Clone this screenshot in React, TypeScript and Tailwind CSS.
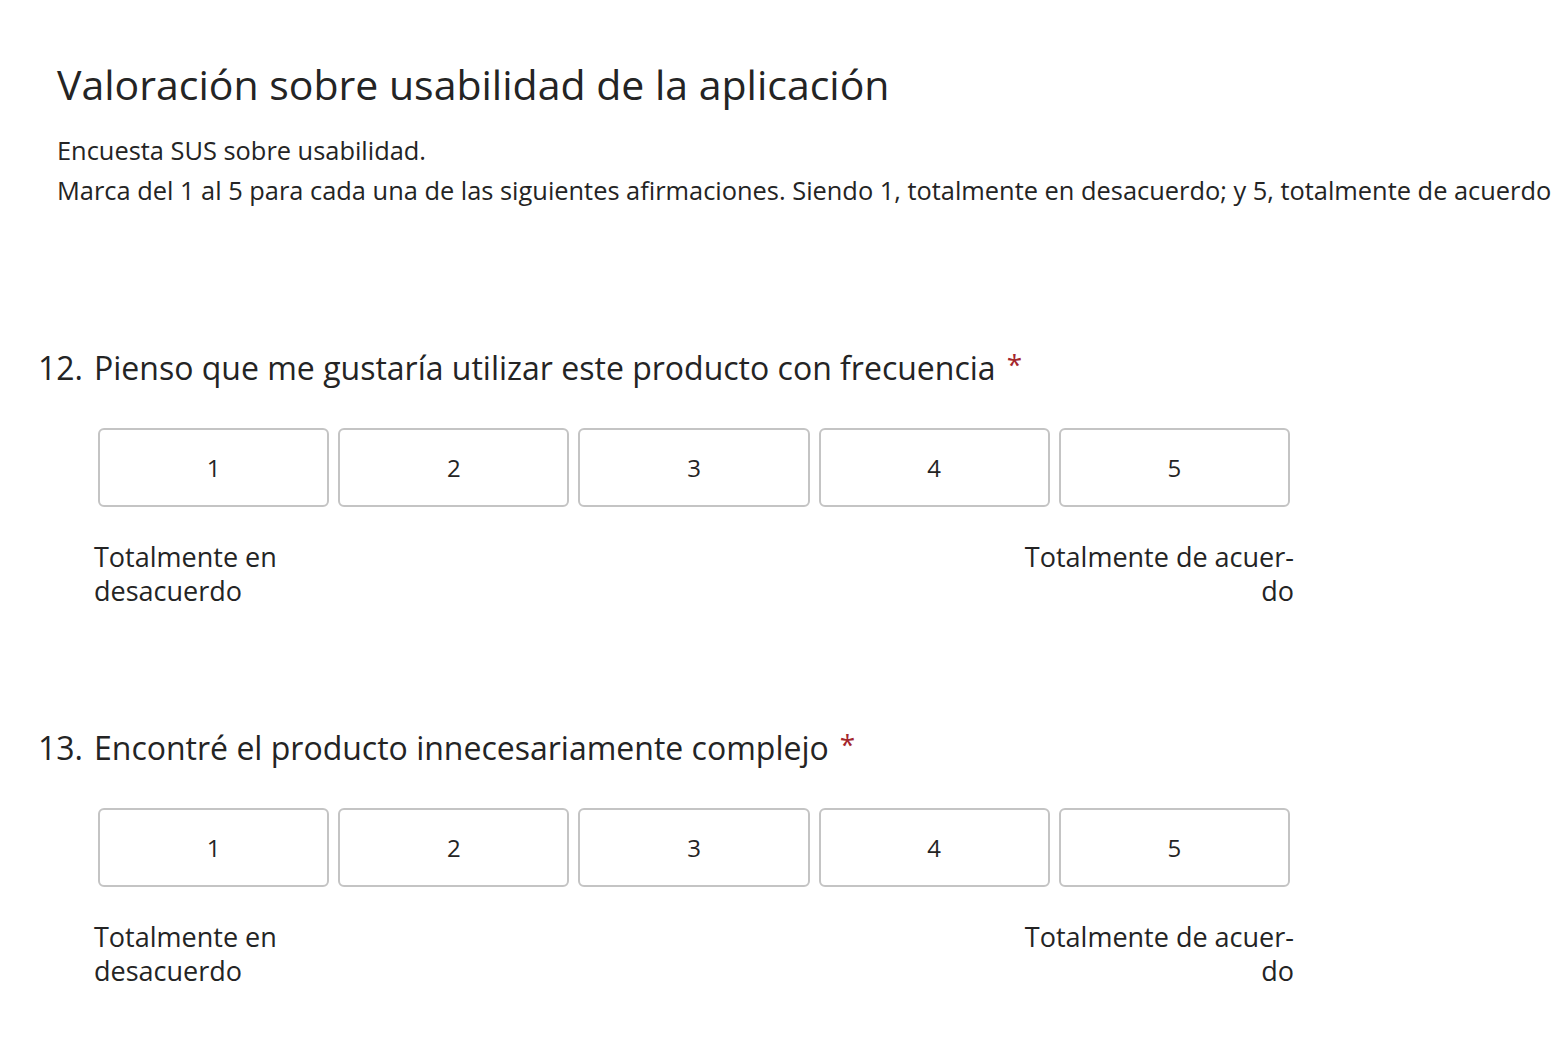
import React from "react";

const font = { fontFamily: '"Segoe UI", "Open Sans", "Noto Sans", sans-serif' };

type Q = { n: number; text: string };

const questions: Q[] = [
  { n: 12, text: "Pienso que me gustaría utilizar este producto con frecuencia" },
  { n: 13, text: "Encontré el producto innecesariamente complejo" },
];

function Question({ q }: { q: Q }) {
  return (
    <div className="mt-[120px] first:mt-0">
      {/* titulo de la pregunta */}
      <div className="flex items-baseline text-[32px] leading-[40px] text-[#242424]">
        <span className="w-[56px] shrink-0">{q.n}.</span>
        <span>{q.text}</span>
        <span className="ml-[11px] relative -top-[5px] text-[28px] text-[#a4262c]">*</span>
      </div>

      {/* escala 1..5 */}
      <div className="mt-[39px] ml-[60px] w-[1192px]">
        <div className="grid grid-cols-5 gap-[9px]">
          {[1, 2, 3, 4, 5].map((v) => (
            <div
              key={v}
              className="h-[79px] rounded-[6px] border-2 border-[#c4c4c4] bg-white flex items-center justify-center text-[24px] text-[#242424]"
            >
              {v}
            </div>
          ))}
        </div>
        <div className="-ml-[4px] -mr-[4px] mt-[33px] flex justify-between text-[27px] leading-[34px] text-[#242424]">
          <div>
            Totalmente en
            <br />
            desacuerdo
          </div>
          <div className="text-right">
            Totalmente de acuer-
            <br />
            do
          </div>
        </div>
      </div>
    </div>
  );
}

export default function App() {
  return (
    <main className="min-h-screen bg-white" style={font}>
      {/* encabezado */}
      <section className="pl-[57px] pt-[56px]">
        <h1 className="text-[41px] leading-[56px] text-[#242424]">
          Valoración sobre usabilidad de la aplicación
        </h1>
        <div className="mt-[18px] text-[25.4px] leading-[40px] text-[#242424] whitespace-nowrap">
          <p>Encuesta SUS sobre usabilidad.</p>
          <p>
            Marca del 1 al 5 para cada una de las siguientes afirmaciones. Siendo 1, totalmente en desacuerdo; y 5, totalmente de acuerdo
          </p>
        </div>
      </section>

      {/* preguntas */}
      <section className="pl-[38px] pt-[138px]">
        {questions.map((q) => (
          <Question key={q.n} q={q} />
        ))}
      </section>
    </main>
  );
}
